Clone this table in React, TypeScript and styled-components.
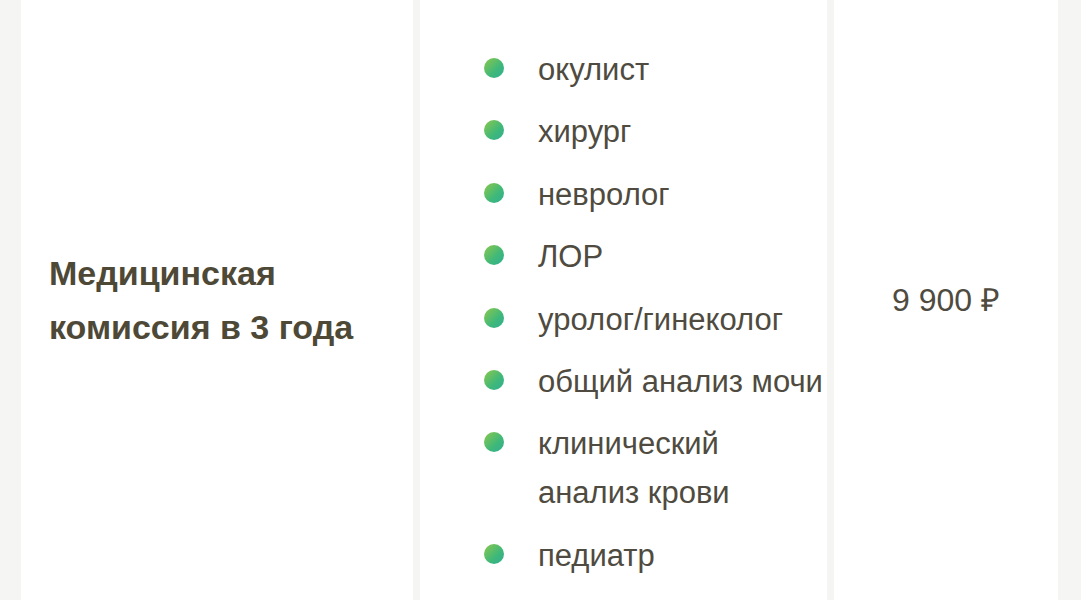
import React from "react";
import styled, { createGlobalStyle } from "styled-components";

const Global = createGlobalStyle`
  html, body { margin: 0; padding: 0; background: #f5f5f4; }
  body { font-family: "Liberation Sans", Arial, sans-serif; }
`;

const Row = styled.div`
  display: flex;
  gap: 7px;
  height: 600px;
  padding: 0 23px 0 21px;
  box-sizing: border-box;
  overflow: hidden;
`;

const Cell = styled.div<{ $w: number; $align?: string; $justify?: string }>`
  width: ${(p) => p.$w}px;
  flex: none;
  background: #ffffff;
  display: flex;
  align-items: ${(p) => p.$align || "center"};
  justify-content: ${(p) => p.$justify || "flex-start"};
  box-sizing: border-box;
`;

const Title = styled.div`
  padding-left: 28px;
  font-size: 34px;
  font-weight: 700;
  line-height: 54px;
  color: #4e4937;
`;

const List = styled.ul`
  list-style: none;
  margin: 0;
  padding: 45px 0 0 64px;
  display: flex;
  flex-direction: column;
  gap: 13.4px;
`;

const Item = styled.li`
  display: flex;
  align-items: flex-start;
  gap: 34px;
  font-size: 31px;
  line-height: 49px;
  color: #4f4b40;
  white-space: nowrap;
`;

const Dot = styled.span`
  flex: none;
  width: 20px;
  height: 20px;
  margin-top: 13px;
  border-radius: 50%;
  background: linear-gradient(135deg, #8cc84b 0%, #3fb87a 60%, #2fb091 100%);
`;

const Price = styled.div`
  font-size: 32px;
  color: #4f4b40;
  line-height: 49px;
`;

const items = [
  "окулист",
  "хирург",
  "невролог",
  "ЛОР",
  "уролог/гинеколог",
  "общий анализ мочи",
  "клинический\nанализ крови",
  "педиатр",
];

export default function App() {
  return (
    <>
      <Global />
      <Row>
        <Cell $w={392}>
          <Title>
            Медицинская
            <br />
            комиссия в 3 года
          </Title>
        </Cell>
        <Cell $w={407} $align="flex-start">
          <List>
            {items.map((t) => (
              <Item key={t}>
                <Dot />
                <span>
                  {t.split("\n").map((l, i) => (
                    <React.Fragment key={i}>
                      {i > 0 && <br />}
                      {l}
                    </React.Fragment>
                  ))}
                </span>
              </Item>
            ))}
          </List>
        </Cell>
        <Cell $w={224} $justify="center">
          <Price>9 900 ₽</Price>
        </Cell>
      </Row>
    </>
  );
}
